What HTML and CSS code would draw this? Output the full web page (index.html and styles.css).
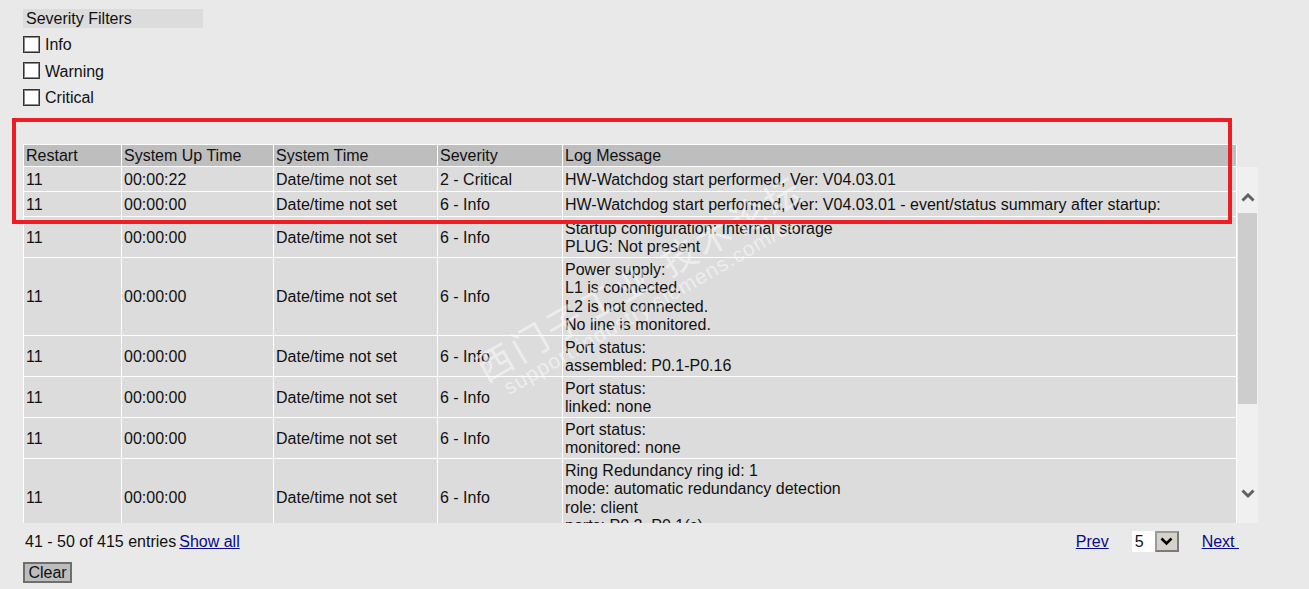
FILE: index.html
```html
<!DOCTYPE html>
<html lang="en">
<head>
<meta charset="utf-8">
<title>Event Log</title>
<link rel="stylesheet" href="styles.css">
</head>
<body>
<div class="page">
  <div class="filters">
    <div class="filter-title">Severity Filters</div>
    <div class="filter-list">
      <label class="filter-item"><span class="check"></span><span>Info</span></label>
      <label class="filter-item"><span class="check"></span><span>Warning</span></label>
      <label class="filter-item"><span class="check"></span><span>Critical</span></label>
    </div>
  </div>

  <table class="log-table log-head">
    <colgroup><col class="c1"><col class="c2"><col class="c3"><col class="c4"><col class="c5"></colgroup>
    <tr><th>Restart</th><th>System Up Time</th><th>System Time</th><th>Severity</th><th>Log Message</th></tr>
  </table>

  <div class="scroll-row">
    <div class="scroll-body">
      <table class="log-table log-body">
        <colgroup><col class="c1"><col class="c2"><col class="c3"><col class="c4"><col class="c5"></colgroup>
        <tr class="single"><td>11</td><td>00:00:22</td><td>Date/time not set</td><td>2 - Critical</td><td>HW-Watchdog start performed, Ver: V04.03.01</td></tr>
        <tr class="single"><td>11</td><td>00:00:00</td><td>Date/time not set</td><td>6 - Info</td><td>HW-Watchdog start performed, Ver: V04.03.01 - event/status summary after startup:</td></tr>
        <tr><td>11</td><td>00:00:00</td><td>Date/time not set</td><td>6 - Info</td><td>Startup configuration: Internal storage<br>PLUG: Not present</td></tr>
        <tr><td>11</td><td>00:00:00</td><td>Date/time not set</td><td>6 - Info</td><td>Power supply:<br>L1 is connected.<br>L2 is not connected.<br>No line is monitored.</td></tr>
        <tr><td>11</td><td>00:00:00</td><td>Date/time not set</td><td>6 - Info</td><td>Port status:<br>assembled: P0.1-P0.16</td></tr>
        <tr><td>11</td><td>00:00:00</td><td>Date/time not set</td><td>6 - Info</td><td>Port status:<br>linked: none</td></tr>
        <tr><td>11</td><td>00:00:00</td><td>Date/time not set</td><td>6 - Info</td><td>Port status:<br>monitored: none</td></tr>
        <tr><td>11</td><td>00:00:00</td><td>Date/time not set</td><td>6 - Info</td><td>Ring Redundancy ring id: 1<br>mode: automatic redundancy detection<br>role: client<br>ports: P0.2, P0.1(c)</td></tr>
      </table>
    </div>
    <div class="scrollbar">
      <svg class="sb-arrow sb-up" width="14" height="10" viewBox="0 0 14 10"><path d="M1.5 8.5 L7 3 L12.5 8.5" fill="none" stroke="#606060" stroke-width="3"/></svg>
      <div class="sb-thumb"></div>
      <svg class="sb-arrow sb-down" width="14" height="10" viewBox="0 0 14 10"><path d="M1.5 1.5 L7 7 L12.5 1.5" fill="none" stroke="#606060" stroke-width="3"/></svg>
    </div>
  </div>

  <div class="footer">
    <div class="entries">41 - 50 of 415 entries<a href="#" class="link show-all">Show all</a></div>
    <div class="pager">
      <a href="#" class="link">Prev</a>
      <div class="page-select">
        <span class="page-value">5</span>
        <span class="page-btn"><svg width="13" height="9" viewBox="0 0 13 9"><path d="M1.5 1.5 L6.5 6.5 L11.5 1.5" fill="none" stroke="#000" stroke-width="2.6"/></svg></span>
      </div>
      <a href="#" class="link">Next&nbsp;</a>
    </div>
  </div>

  <div class="actions"><button class="clear-btn" type="button">Clear</button></div>

  <div class="watermark">
    <div class="wm-big">西门子工业 技术论坛</div>
    <div class="wm-small">support.industry.siemens.com/cs</div>
  </div>
  <div class="highlight"></div>
</div>
</body>
</html>
```

FILE: styles.css
```css
html, body {
  margin: 0;
  padding: 0;
  background: #e9e9e9;
}

body {
  font-family: "Liberation Sans", Arial, sans-serif;
  font-size: 16px;
  color: #111;
}

.page {
  position: relative;
  padding: 9px 0 0 23px;
  width: 1286px;
  height: 580px;
  overflow: hidden;
}

.filter-title {
  width: 177px;
  height: 19px;
  line-height: 19px;
  padding-left: 3px;
  background: #dcdcdc;
}

.filter-list {
  margin-top: 3px;
  display: flex;
  flex-direction: column;
}

.filter-item {
  height: 26.5px;
  display: flex;
  align-items: center;
  gap: 5px;
}

.filter-item span:last-child {
  padding-top: 2px;
}

.check {
  width: 15px;
  height: 15px;
  background: #fff;
  border: 1px solid #333;
  box-shadow: inset 0 0 0 1px #8a8a8a;
}

.log-table {
  width: 1214px;
  table-layout: fixed;
  border-collapse: separate;
  border-spacing: 1px;
  background: #fff;
}

.c1 { width: 97px; }
.c2 { width: 151px; }
.c3 { width: 163px; }
.c4 { width: 124px; }
.c5 { width: 673px; }

.log-head {
  margin-top: 33.5px;
}

.log-head th {
  height: 21px;
  padding: 0 2px;
  line-height: 21px;
  text-align: left;
  font-weight: normal;
  background: #bebebe;
  white-space: nowrap;
}

.scroll-row {
  display: flex;
  margin-top: -1px;
}

.scroll-body {
  width: 1214px;
  height: 357px;
  overflow: hidden;
}

.log-body td {
  padding: 2.5px 2px 0.5px;
  line-height: 18.5px;
  background: #dcdcdc;
  vertical-align: middle;
  white-space: nowrap;
}

.log-body tr.single td {
  height: 21px;
}

.scrollbar {
  position: relative;
  width: 21px;
  height: 356px;
  margin-top: 1px;
  background: #f0f0f0;
}

.sb-arrow {
  position: absolute;
  left: 4px;
}

.sb-up { top: 25px; }
.sb-down { top: 322px; }

.sb-thumb {
  position: absolute;
  left: 1px;
  right: 1px;
  top: 46px;
  height: 191px;
  background: #cdcdcd;
}

.footer {
  width: 1216px;
  height: 21px;
  margin-top: 8px;
  display: flex;
  align-items: center;
  justify-content: space-between;
}

.entries {
  padding-left: 2px;
}

.show-all {
  margin-left: 3px;
}

.link {
  color: #0a0a88;
  text-decoration: underline;
}

.pager {
  display: flex;
  align-items: center;
  gap: 23px;
}

.page-select {
  display: flex;
  height: 21px;
}

.page-value {
  width: 20px;
  padding-left: 3px;
  line-height: 21px;
  background: #fff;
}

.page-btn {
  width: 20px;
  height: 17px;
  display: flex;
  align-items: center;
  justify-content: center;
  background: #d6d2ca;
  border: 2px solid #7a7a7a;
  border-top-color: #9a9a9a;
  border-left-color: #9a9a9a;
}

.actions {
  margin-top: 10px;
}

.clear-btn {
  font-family: "Liberation Sans", Arial, sans-serif;
  font-size: 16px;
  color: #111;
  height: 21px;
  width: 49px;
  padding: 0;
  line-height: 17px;
  background: #bdbdbd;
  border: 2px solid #6e6e6e;
  border-radius: 0;
}

.watermark {
  position: absolute;
  left: 468px;
  top: 352px;
  transform: rotate(-30deg);
  transform-origin: left top;
  color: rgba(255, 255, 255, 0.5);
  pointer-events: none;
  white-space: nowrap;
}

.wm-big {
  font-family: "Noto Sans CJK SC", sans-serif;
  font-size: 36px;
  letter-spacing: 4px;
  line-height: 40px;
}

.wm-small {
  font-family: "Liberation Sans", Arial, sans-serif;
  font-size: 21px;
  letter-spacing: 1px;
  line-height: 22px;
  margin-left: 14px;
}

.highlight {
  position: absolute;
  left: 12px;
  top: 118px;
  width: 1212px;
  height: 98px;
  border: 4px solid #ee1c25;
  pointer-events: none;
}
```
